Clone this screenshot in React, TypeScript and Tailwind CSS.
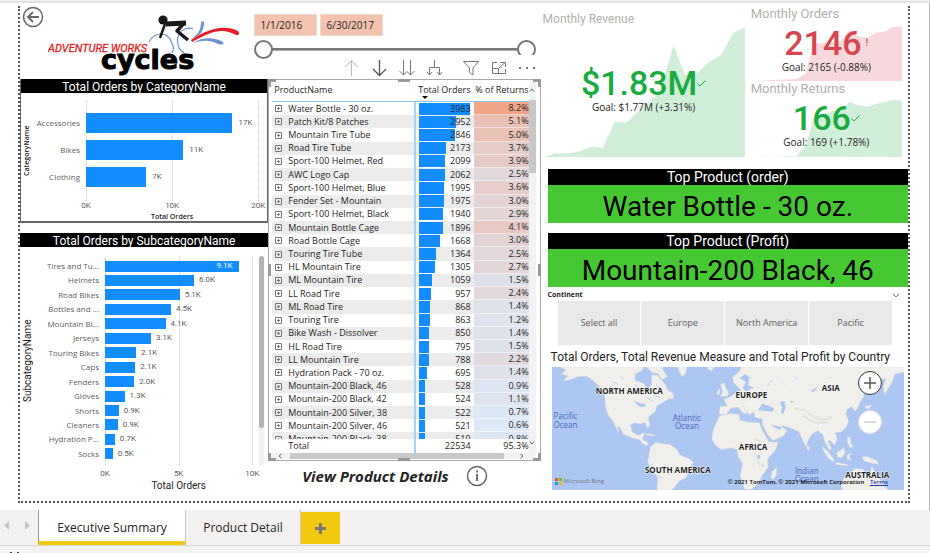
import React from "react";

type Bar = { name: string; value: string; pct: number };

const categories: Bar[] = [
  { name: "Accessories", value: "17K", pct: 85 },
  { name: "Bikes", value: "11K", pct: 56.5 },
  { name: "Clothing", value: "7K", pct: 35 },
];

const subcategories: Bar[] = [
  { name: "Tires and Tu...", value: "9.1K", pct: 90.7 },
  { name: "Helmets", value: "6.0K", pct: 60.4 },
  { name: "Road Bikes", value: "5.1K", pct: 50.7 },
  { name: "Bottles and ...", value: "4.5K", pct: 44.8 },
  { name: "Mountain Bi...", value: "4.1K", pct: 41.1 },
  { name: "Jerseys", value: "3.1K", pct: 31.2 },
  { name: "Touring Bikes", value: "2.1K", pct: 21.1 },
  { name: "Caps", value: "2.1K", pct: 20.6 },
  { name: "Fenders", value: "2.0K", pct: 19.8 },
  { name: "Gloves", value: "1.3K", pct: 13.3 },
  { name: "Shorts", value: "0.9K", pct: 9.3 },
  { name: "Cleaners", value: "0.9K", pct: 8.6 },
  { name: "Hydration P...", value: "0.7K", pct: 6.7 },
  { name: "Socks", value: "0.5K", pct: 5.2 },
];

const products: [string, number, number][] = [
  ["Water Bottle - 30 oz.", 3983, 8.2],
  ["Patch Kit/8 Patches", 2952, 5.1],
  ["Mountain Tire Tube", 2846, 5.0],
  ["Road Tire Tube", 2173, 3.7],
  ["Sport-100 Helmet, Red", 2099, 3.9],
  ["AWC Logo Cap", 2062, 2.5],
  ["Sport-100 Helmet, Blue", 1995, 3.6],
  ["Fender Set - Mountain", 1975, 3.0],
  ["Sport-100 Helmet, Black", 1940, 2.9],
  ["Mountain Bottle Cage", 1896, 4.1],
  ["Road Bottle Cage", 1668, 3.0],
  ["Touring Tire Tube", 1364, 2.5],
  ["HL Mountain Tire", 1305, 2.7],
  ["ML Mountain Tire", 1059, 1.5],
  ["LL Road Tire", 957, 2.4],
  ["ML Road Tire", 868, 1.4],
  ["Touring Tire", 863, 1.2],
  ["Bike Wash - Dissolver", 850, 1.4],
  ["HL Road Tire", 795, 1.5],
  ["LL Mountain Tire", 788, 2.2],
  ["Hydration Pack - 70 oz.", 695, 1.4],
  ["Mountain-200 Black, 46", 528, 0.9],
  ["Mountain-200 Black, 42", 524, 1.1],
  ["Mountain-200 Silver, 38", 522, 0.7],
  ["Mountain-200 Silver, 46", 521, 0.6],
  ["Mountain-200 Black, 38", 519, 0.8],
];

function heat(value: number) {
  const t = Math.min(1, Math.max(0, (value - 0.6) / 7.6));
  const low = [221, 233, 247];
  const high = [240, 164, 136];
  return `rgb(${low.map((c, i) => Math.round(c + (high[i] - c) * t)).join(",")})`;
}

function Logo() {
  return (
    <svg viewBox="0 0 194 64" className="h-16 w-[194px]" role="img" aria-label="Adventure Works Cycles">
      <g fill="none" stroke="#6f93d2" strokeWidth="1.2">
        <path d="M101 28 C107 17 119 18 123 27 C126 33 126 35 124 39" />
        <path d="M137 40 C127 34 127 19 137 15 C140 14 143 14 145 15" />
      </g>
      <path d="M143 25 C150 21 153 16 153 8 C155 6 157 8 156 11 C155 18 151 23 143 25Z" fill="#6f93d2" />
      <path d="M145 29 C156 22 168 24 175 28 C177 31 173 31 170 30 C162 26 155 26 145 29Z" fill="#6f93d2" />
      <path d="M143 26 C156 17 175 9 190 17 C193 21 189 22 186 20 C173 13 160 19 144 28Z" fill="#ec1c24" />
      <g fill="none" stroke="#1a1718" strokeLinejoin="round">
        <path d="M112 24 L117 10 L120 9" strokeWidth="2.5" />
        <path d="M118 10 L138 9" strokeWidth="5" />
        <path d="M137 8 L129 17 L140 26" strokeWidth="3.5" />
      </g>
      <circle cx="115" cy="6" r="4.6" fill="#1a1718" />
      <text x="0" y="38" fill="#ec1c24" stroke="#ec1c24" strokeWidth="0.3" fontSize="11" fontStyle="italic" fontFamily="Roboto, sans-serif">ADVENTURE WORKS</text>
      <text x="53" y="55" fill="#000" stroke="#000" strokeWidth="1" fontSize="27" fontWeight="700" fontFamily="'DejaVu Sans', sans-serif">cycles</text>
    </svg>
  );
}

function BackButton() {
  return (
    <button aria-label="Back" className="ml-0.5 h-[22px] w-[22px] shrink-0">
      <svg viewBox="0 0 22 22" className="h-[22px] w-[22px]" fill="none" stroke="#666">
        <circle cx="11" cy="11" r="9.5" strokeWidth="1.5" />
        <path d="M17 11 H6 M11 6 L6 11 L11 16" strokeWidth="1.8" />
      </svg>
    </button>
  );
}

const thumb =
  "pointer-events-none absolute inset-x-0 top-0 m-0 h-[19px] w-full appearance-none bg-transparent [&::-webkit-slider-thumb]:pointer-events-auto [&::-webkit-slider-thumb]:h-[19px] [&::-webkit-slider-thumb]:w-[19px] [&::-webkit-slider-thumb]:appearance-none [&::-webkit-slider-thumb]:rounded-full [&::-webkit-slider-thumb]:border-2 [&::-webkit-slider-thumb]:border-[#777] [&::-webkit-slider-thumb]:bg-white";

function DateSlicer() {
  const box = "h-[22px] border border-[#f0d8cc] bg-[#f4c3ad] px-1.5 text-[10px] text-[#252423] outline-none";
  return (
    <div className="flex w-[282px] flex-col">
      <div className="mt-2 flex gap-[3px]">
        <input aria-label="Start date" defaultValue="1/1/2016" className={`${box} w-[63px]`} />
        <input aria-label="End date" defaultValue="6/30/2017" className={`${box} w-[63px]`} />
      </div>
      <div className="relative mt-1 h-[19px]">
        <div className="absolute inset-x-3 top-2 h-[3px] border-b border-[#aaa] bg-[#777]" />
        <input type="range" aria-label="Range start" min={0} max={100} defaultValue={0} className={thumb} />
        <input type="range" aria-label="Range end" min={0} max={100} defaultValue={100} className={thumb} />
      </div>
      <VisualToolbar />
    </div>
  );
}

function VisualToolbar() {
  const b = "flex h-5 w-[18px] items-center justify-center";
  return (
    <div className="relative z-10 -mt-1 ml-[88px] flex h-6 items-center bg-white pt-0.5 text-[#777]">
      <button aria-label="Drill up" className={`${b} text-[#bbb]`}>
        <svg viewBox="0 0 18 18" className="h-[18px] w-[18px]" fill="none" stroke="currentColor"><path d="M9.500 17 V2 M3 8 L9.500 1.500 L16 8" /></svg>
      </button>
      <button aria-label="Drill down" className={`${b} ml-2.5 text-[#555]`}>
        <svg viewBox="0 0 18 18" className="h-[18px] w-[18px]" fill="none" stroke="currentColor" strokeWidth="1.300"><path d="M9.500 1 V16 M3 10 L9.500 16.500 L16 10" /></svg>
      </button>
      <button aria-label="Next level" className={`${b} ml-2.5`}>
        <svg viewBox="0 0 18 18" className="h-[18px] w-[18px]" fill="none" stroke="currentColor"><path d="M5.500 1 V16 M1.500 12 L5.500 16 L9 12.500 M12.500 1 V16 M9 12.500 L12.500 16 L16.500 12" /></svg>
      </button>
      <button aria-label="Expand all" className={`${b} ml-2.5`}>
        <svg viewBox="0 0 18 18" className="h-[18px] w-[18px]" fill="none" stroke="currentColor"><path d="M8.500 1 V8 M3.500 16 V8.500 H13.500 V16 M1 13 L3.500 16 L6 13 M11 13 L13.500 16 L16 13" /></svg>
      </button>
      <button aria-label="Filters" className={`${b} ml-[18px]`}>
        <svg viewBox="0 0 18 18" className="h-[18px] w-[18px]" fill="none" stroke="currentColor"><path d="M1.500 2.500 H16.500 L11 9 V16 L7.500 13.500 V9 Z" /></svg>
      </button>
      <button aria-label="Focus mode" className={`${b} ml-2.5`}>
        <svg viewBox="0 0 18 18" className="h-[18px] w-[18px]" fill="none" stroke="currentColor"><path d="M7 3.500 H2.500 V14.500 H15.500 V10 M2.500 9.500 H8.500 V14.500 M9 9 L15 3.500 M10.500 3.500 H15.500 V8" /></svg>
      </button>
      <button aria-label="More options" className={`${b} ml-2.5`}>
        <svg viewBox="0 0 18 18" className="h-[18px] w-[18px]" fill="#777"><path d="M1 8h2v2h-2z M8 8h2v2h-2z M15 8h2v2h-2z" /></svg>
      </button>
    </div>
  );
}

function GridLines() {
  return (
    <div aria-hidden className="absolute inset-0 flex justify-between">
      {[0, 1, 2].map((i) => (
        <div key={i} className="-mr-px border-l border-dotted border-[#ccc]" />
      ))}
    </div>
  );
}

function Axis({ labels }: { labels: string[] }) {
  return (
    <div className="flex justify-between font-[Roboto,sans-serif] text-[8px] leading-[10px] text-[#605e5c]">
      {labels.map((l) => (
        <span key={l} className="flex w-0 justify-center">{l}</span>
      ))}
    </div>
  );
}

function CategoryChart() {
  return (
    <section className="flex h-36 flex-col border-x border-b-2 border-[#666] bg-white">
      <h2 className="h-[14px] bg-black text-center font-[Roboto,sans-serif] text-[12px] leading-4 text-white">Total Orders by CategoryName</h2>
      <div className="flex flex-1 pt-2">
        <div className="flex w-[65px] justify-between pr-1.5">
          <span className="h-[100px] w-3 rotate-180 text-center text-[7px] leading-3 font-semibold text-[#252423] [writing-mode:vertical-rl]">CategoryName</span>
          <div className="flex flex-col gap-[7px] pt-3 text-right text-[8px] leading-5 text-[#605e5c]">
            {categories.map((c) => <span key={c.name}>{c.name}</span>)}
          </div>
        </div>
        <div className="mr-[9px] flex-1">
          <div className="relative flex h-[100px] flex-col gap-[7px] pt-3">
            <GridLines />
            {categories.map((c) => (
              <div key={c.name} className="relative flex h-5 items-center">
                <div className="h-full shrink-0 bg-[#118dff]" style={{ width: `${c.pct}%` }} />
                <span className="ml-1.5 font-[Roboto,sans-serif] text-[8px] text-[#605e5c]">{c.value}</span>
              </div>
            ))}
          </div>
          <Axis labels={["0K", "10K", "20K"]} />
          <p className="text-center text-[7px] leading-3 font-semibold text-[#252423]">Total Orders</p>
        </div>
      </div>
    </section>
  );
}

function SubcategoryChart() {
  return (
    <section className="mt-2.5 flex flex-1 flex-col">
      <h2 className="h-[14px] bg-black text-center font-[Roboto,sans-serif] text-[12px] leading-4 text-white">Total Orders by SubcategoryName</h2>
      <div className="flex pt-[9px]">
        <div className="flex w-[85px] justify-between pr-1.5">
          <span className="h-[209px] w-4 rotate-180 text-center font-[Roboto,sans-serif] text-[10px] leading-4 text-[#252423] [writing-mode:vertical-rl]">SubcategoryName</span>
          <div className="flex h-[209px] flex-col justify-between pt-1 pb-[5px] text-right text-[8px] leading-3 whitespace-nowrap text-[#605e5c]">
            {subcategories.map((c) => <span key={c.name}>{c.name}</span>)}
          </div>
        </div>
        <div className="mr-[7px] flex-1">
          <div className="relative flex h-[209px] flex-col justify-between pt-1 pb-[5px]">
            <GridLines />
            {subcategories.map((c, i) => (
              <div key={c.name} className="relative flex h-3 items-center">
                <div className="flex h-[11px] shrink-0 items-center justify-end bg-[#118dff] pr-1.5 font-[Roboto,sans-serif] text-[8px] text-white" style={{ width: `${c.pct}%` }}>
                  {i === 0 && c.value}
                </div>
                {i > 0 && <span className="ml-[5px] font-[Roboto,sans-serif] text-[8px] text-[#605e5c]">{c.value}</span>}
              </div>
            ))}
          </div>
          <div className="pt-1"><Axis labels={["0K", "5K", "10K"]} /></div>
          <p className="pt-px text-center font-[Roboto,sans-serif] text-[10px] leading-3 text-[#252423]">Total Orders</p>
        </div>
        <div className="mr-1 h-[209px] w-[5px] rounded-full bg-[#f0f0f0]">
          <div className="h-[172px] rounded-full bg-[#b3b3b3]" />
        </div>
      </div>
    </section>
  );
}

function ResizeHandles() {
  const h = "absolute border-[#999]";
  return (
    <div aria-hidden className="pointer-events-none">
      <i className={`${h} -top-px -left-px h-2 w-2 border-t-3 border-l-3`} />
      <i className={`${h} -top-px -right-px h-2 w-2 border-t-3 border-r-3`} />
      <i className={`${h} -bottom-px -left-px h-2 w-2 border-b-3 border-l-3`} />
      <i className={`${h} -right-px -bottom-px h-2 w-2 border-r-3 border-b-3`} />
      <i className={`${h} -top-px left-1/2 w-3 -translate-x-1/2 border-t-3`} />
      <i className={`${h} -bottom-px left-1/2 w-3 -translate-x-1/2 border-t-3`} />
      <i className={`${h} top-1/2 -left-px h-3 -translate-y-1/2 border-l-3`} />
      <i className={`${h} top-1/2 -right-px h-3 -translate-y-1/2 border-l-3`} />
    </div>
  );
}

function ProductTable() {
  return (
    <div className="relative flex h-[382px] flex-col border border-[#aaa] bg-white pt-0.5 pl-[3px]">
      <ResizeHandles />
      <div className="flex pr-1">
        <div className="h-[371px] flex-1 overflow-hidden">
          <table className="h-[378px] w-full table-fixed border-separate border-spacing-0 text-[9px] leading-3 whitespace-nowrap text-[#252423]">
            <thead>
              <tr className="h-5">
                <th className="border-b border-[#8cc4f5] p-0 pt-0.5 pl-0.5 text-left align-top font-normal">ProductName</th>
                <th className="w-[58px] border-b border-[#8cc4f5] p-0 pt-0.5 pr-[3px] text-right align-top font-normal">
                  <div>Total Orders</div>
                  <svg viewBox="0 0 6 3" className="ml-1.5 h-[3px] w-1.5"><path d="M0 0H6L3 3Z" /></svg>
                </th>
                <th className="w-[55px] border-b border-[#8cc4f5] p-0 pt-0.5 text-right align-top font-normal">% of Returns</th>
              </tr>
            </thead>
            <tbody>
              {products.map(([name, orders, returns]) => (
                <tr key={name} className="even:bg-[#ececec]">
                  <td className="border-r-2 border-[#a8d2f8] p-0">
                    <span className="flex items-center">
                      <button aria-label={`Expand ${name}`} className="mr-1.5 ml-[3px] h-[7px] w-[7px]">
                        <svg viewBox="0 0 7 7" className="h-[7px] w-[7px]" fill="none" stroke="#777"><path d="M.5 .5H6.500V6.500H.5Z M2 3.500H5M3.500 2V5" /></svg>
                      </button>
                      {name}
                    </span>
                  </td>
                  <td className="p-0 pl-[3px]">
                    <div className="relative mr-[3px] h-3 text-right">
                      <div className="absolute inset-y-0 left-0 bg-[#118dff]" style={{ width: `${(orders / 3983) * 98}%` }} />
                      <span className="relative">{orders}</span>
                    </div>
                  </td>
                  <td className="border-b border-white/50 p-0 text-right" style={{ backgroundColor: heat(returns) }}>
                    {returns.toFixed(1)}%
                  </td>
                </tr>
              ))}
            </tbody>
            <tfoot>
              <tr className="h-[14px]">
                <td className="sticky bottom-0 z-10 border-r-2 border-[#a8d2f8] bg-white p-0 pl-4">Total</td>
                <td className="sticky bottom-0 z-10 bg-white p-0 pr-[3px] text-right">22534</td>
                <td className="sticky bottom-0 z-10 bg-white p-0 text-right">95.3%</td>
              </tr>
            </tfoot>
          </table>
        </div>
        <div className="flex w-[7px] flex-col items-center bg-[#f2f2f2] pt-[6px] pb-2 text-[#666]">
          <svg viewBox="0 0 6 4" className="h-1 w-1.5" fill="none" stroke="currentColor"><path d="M1 3.500L3 1L5 3.500" /></svg>
          <div className="mt-2 h-[73px] w-full bg-[#c8c8c8]" />
          <svg viewBox="0 0 6 4" className="mt-auto h-1 w-1.5" fill="none" stroke="currentColor"><path d="M1 .5L3 3L5 .5" /></svg>
        </div>
      </div>
      <div className="mr-1 flex h-1.5 items-center gap-2 bg-[#f2f2f2] px-1.5 text-[#666]">
        <svg viewBox="0 0 4 6" className="h-1.5 w-1" fill="none" stroke="currentColor"><path d="M3.500 1L1 3L3.500 5" /></svg>
        <div className="mr-2 h-1.5 flex-1 bg-[#c8c8c8]" />
        <svg viewBox="0 0 4 6" className="mr-1.5 h-1.5 w-1" fill="none" stroke="currentColor"><path d="M.5 1L3 3L.5 5" /></svg>
      </div>
    </div>
  );
}

type KpiProps = {
  title: string; value: string; goal: string; good: boolean; area: string; viewBox: string; size: string; gap: string; titleSize: string;
};

function Kpi({ title, value, goal, good, area, viewBox, size, gap, titleSize }: KpiProps) {
  return (
    <section className="flex flex-col font-[Roboto,sans-serif]">
      <h3 className={`${titleSize} text-[#b3b0ad]`}>{title}</h3>
      <div className={`relative ${size}`}>
        <svg viewBox={viewBox} preserveAspectRatio="none" className="absolute inset-0 h-full w-full" aria-hidden>
          <polygon points={area} fill={good ? "#d1eed9" : "#f7d9dd"} />
        </svg>
        <div className={`relative flex flex-col items-center ${gap}`}>
          <div className={`flex items-center text-[34px] leading-9 font-medium ${good ? "text-[#1aab40]" : "text-[#d64550]"}`}>
            {value}
            {good ? (
              <svg viewBox="0 0 9 7" className="h-[7px] w-[9px]" fill="none" stroke="currentColor"><path d="M.5 3.500L3 6L8.500 .5" /></svg>
            ) : (
              <span className="ml-1 text-[11px] font-normal">!</span>
            )}
          </div>
          <p className="font-['Open_Sans',sans-serif] text-[10px] leading-3 text-[#252423]">{goal}</p>
        </div>
      </div>
    </section>
  );
}

function TopProduct({ title, name }: { title: string; name: string }) {
  return (
    <section className="mb-2.5 text-center font-[Roboto,sans-serif]">
      <h2 className="h-4 bg-black text-[14px] leading-4 text-white">{title}</h2>
      <p className="h-[38px] bg-[#46c832] pt-1 text-[28px] leading-9 text-black">{name}</p>
    </section>
  );
}

function WorldMap() {
  return (
    <div className="relative mr-1 ml-1 h-[123px] bg-[#abc7f2]">
      <svg viewBox="36 66 1053 369" preserveAspectRatio="xMidYMid slice" className="h-full w-full" role="img" aria-label="World map">
        <g fill="#f0efec" stroke="#dcdcd8" strokeWidth="1.500" strokeLinejoin="round">
          <path d="M60 66L78 76 64 88 84 92 70 108 92 104 112 96 138 94 156 104 172 120 184 134 194 156 196 188 204 210 218 228 228 250 236 262 230 242 240 250 250 268 276 278 298 284 308 296 320 302 322 292 306 284 312 262 294 272 276 262 270 240 280 234 300 236 314 232 322 250 328 240 324 216 344 200 350 182 372 170 392 158 396 144 382 136 372 116 362 104 352 92 334 90 334 116 324 138 310 116 284 106 284 88 304 78 310 66Z" />
          <path d="M318 66L366 66 370 80 380 96 366 104 352 86 336 84Z" />
          <path d="M388 150L398 148 400 160 390 162Z" />
          <path d="M412 66L440 66 434 88 426 96 418 84Z" />
          <path d="M330 306L346 292 362 296 388 298 408 312 418 330 448 342 458 352 444 372 438 396 416 408 402 426 394 435 350 435 352 396 336 378 322 350Z" />
          <path d="M310 268L330 266 346 272 330 272Z" />
          <path d="M540 154L546 140 540 118 552 114 554 128 564 144 560 154Z" />
          <path d="M532 136L538 132 536 148 528 148Z" />
          <path d="M500 66L520 66 514 78 502 74Z" />
          <path d="M578 112L576 96 596 80 602 66H1089V82L1060 88 1054 108 1040 132 1030 150 1026 126 1034 100 1004 108 972 116 966 136 968 154 954 176 948 192 940 198 932 184 918 194 914 206 922 230 914 248 898 262 882 262 888 282 880 300 866 286 860 288 872 312 864 314 852 292 846 270 830 256 812 268 800 286 796 306 784 284 774 260 752 250 736 244 720 242 738 258 728 272 696 286 682 272 664 238 666 222 644 218 638 200 626 210 614 196 604 180 620 204 608 206 592 186 570 190 556 210 536 208 538 184 560 184 550 164 572 154 586 142 602 138Z" />
          <path d="M536 214L570 206 594 208 598 226 624 232 656 234 664 256 684 290 712 292 704 314 680 342 682 366 664 390 654 412 634 432H612L598 390 606 356 592 334 590 314 570 308 542 314 524 300 514 282 518 254Z" />
          <path d="M694 378L708 366 706 390 696 404 690 398Z" />
          <path d="M900 416L912 392 930 382 942 370 966 372 970 384 986 388 992 364 1004 388 1022 408 1040 435H904Z" />
          <path d="M842 304L860 318 876 340 880 350 864 342 850 322Z" />
          <path d="M886 324L908 308 912 322 902 338 890 336Z" />
          <path d="M962 336L978 334 1008 348 1012 358 984 352 968 346Z" />
          <path d="M918 278L926 276 928 292 936 306 928 308 920 294Z" />
          <path d="M918 328L930 324 924 334 930 346 918 342Z" />
          <path d="M886 352L920 358 918 362 884 358Z" />
          <path d="M972 184L990 180 984 192 972 190Z" />
          <path d="M976 196L982 210 974 226 954 232 958 224 970 216Z" />
          <path d="M798 302L806 306 804 316 798 312Z" />
        </g>
        <g fill="#abc7f2">
          <path d="M598 100L616 112 606 128 614 140 640 128 622 122 626 98 612 88Z" />
          <path d="M652 196L664 176 680 182 700 190 696 200 672 198Z" />
          <path d="M716 172L730 168 734 186 728 206 720 204 724 188Z" />
          <path d="M688 238L704 250 718 254 722 246 704 242Z" />
          <path d="M650 330h8v10h-8z M664 350l4 16-4-2z M810 138l22-14-16 18z M745 170l12-2-4 6z" />
          <path d="M280 168L298 174 316 178 312 186 296 184Z" />
        </g>
        <g fill="none" stroke="#abc7f2" strokeWidth="2">
          <path d="M284 120l16 12M240 96l12 8M216 112l14 4M348 116l10 20M340 150l20 8M640 150l14 10M620 90l14 14M320 160l20 10M680 124l12-18M760 92l10 14M350 390l14 8" />
          <path d="M640 314l10 28 8 26M600 160l18 8M850 104l24-8M720 110l14 10M820 220l30 10" stroke="#c8d6ea" strokeWidth="1.500" />
        </g>
        <path d="M760 190l30 6 24 18 38 10 22-8M784 212l40 22 36-2M640 280l20 10" fill="none" stroke="#e4e2dc" strokeWidth="6" />
        <g fontFamily="'Open Sans', sans-serif" fontSize="24" fontWeight="700" fill="#222" stroke="#fff" strokeWidth="3" paintOrder="stroke" textAnchor="middle">
          <text x="267" y="146">NORTH AMERICA</text>
          <text x="632" y="158">EUROPE</text>
          <text x="869" y="137">ASIA</text>
          <text x="637" y="316">AFRICA</text>
          <text x="412" y="383">SOUTH AMERICA</text>
          <text x="978" y="399">AUSTRALIA</text>
        </g>
        <g fontFamily="'Open Sans', sans-serif" fontSize="24" fill="#4a6cb8" textAnchor="middle">
          <text x="76" y="222">Pacific</text>
          <text x="76" y="248">Ocean</text>
          <text x="439" y="227">Atlantic</text>
          <text x="439" y="252">Ocean</text>
          <text x="797" y="385">Indian</text>
          <text x="797" y="410">Ocean</text>
        </g>
      </svg>
      <div className="absolute bottom-[5px] left-[3px] flex items-center gap-0.5 text-[6px] leading-2 text-[#777]">
        <svg viewBox="0 0 7 7" className="h-[7px] w-[7px]"><path fill="#f25022" d="M0 0h3v3H0z" /><path fill="#7fba00" d="M4 0h3v3H4z" /><path fill="#00a4ef" d="M0 4h3v3H0z" /><path fill="#ffb900" d="M4 4h3v3H4z" /></svg>
        Microsoft Bing
      </div>
      <p className="absolute right-4 bottom-1 text-[6px] leading-2 font-semibold text-black">
        © 2021 TomTom, © 2021 Microsoft Corporation <a href="#terms" className="ml-1 text-[#1a3fb0] underline">Terms</a>
      </p>
      <div className="absolute top-1 right-[22px] flex flex-col gap-[15px]">
        <button aria-label="Zoom in" className="h-6 w-6 rounded-full border border-[#333] bg-white">
          <svg viewBox="0 0 22 22" stroke="#555" strokeWidth="1.500"><path d="M5 11H17M11 5V17" /></svg>
        </button>
        <button aria-label="Zoom out" className="h-6 w-6 rounded-full border border-[#ddd] bg-white">
          <svg viewBox="0 0 22 22" stroke="#ccc" strokeWidth="1.500"><path d="M5 11H17" /></svg>
        </button>
      </div>
    </div>
  );
}

export default function App() {
  return (
    <div className="bg-white font-['Open_Sans','Noto_Sans',sans-serif]">
      <div className="h-[3px] border-b-2 border-[#e1e1e1] bg-[#f3f2f1]" />
      <div className="border-r border-[#b5b5b5] pt-[3px] pr-[19px] pb-[7px] pl-[18px]">
        <main className="grid grid-cols-[520fr_367fr] border-x-2 border-b-2 border-dotted border-[#555]">
          <div className="flex min-w-0 flex-col">
            <header className="flex h-[73px]">
              <BackButton />
              <div className="mt-2 ml-1 flex-1"><Logo /></div>
              <DateSlicer />
              <div className="w-[5px]" />
            </header>
            <div className="grid flex-1 grid-cols-[248fr_272fr]">
              <div className="flex min-w-0 flex-col">
                <CategoryChart />
                <SubcategoryChart />
              </div>
              <div className="min-w-0">
                <ProductTable />
                <div className="flex items-center gap-[17px] pt-1 pl-[34px]">
                  <button className="text-[15px] leading-5 font-bold text-[#252423] italic">View Product Details</button>
                  <button aria-label="Information" className="h-[22px] w-[22px]">
                    <svg viewBox="0 0 22 22" fill="none" stroke="#666"><circle cx="11" cy="11" r="9.500" strokeWidth="1.500" /><path d="M11 9V16M11 5.500V7.500" strokeWidth="1.800" /></svg>
                  </button>
                </div>
              </div>
            </div>
          </div>
          <div className="min-w-0 pb-[11px]">
            <div className="grid grid-cols-[208fr_159fr] pl-0.5">
              <div className="min-w-0 pt-[5px] pr-[5px]">
                <Kpi title="Monthly Revenue" value="$1.83M" goal="Goal: $1.77M (+3.31%)" good titleSize="text-[12px] leading-4" size="h-[130px]" gap="pt-[38px]" viewBox="10 86 603 385"
                  area="12,471 45,461 80,461 115,456 152,441 188,444 224,366 260,369 295,335 330,305 358,280 400,140 433,228 470,222 505,190 542,168 578,102 613,86 613,471" />
              </div>
              <div className="min-w-0 pr-1.5 pl-px">
                <Kpi title="Monthly Orders" value="2146" goal="Goal: 2165 (-0.88%)" good={false} titleSize="text-[13px] leading-4" size="h-[59px]" gap="pt-[3px]" viewBox="634 64 455 177"
                  area="640,241 700,238 770,235 798,220 822,130 870,125 905,120 930,88 955,105 985,112 1008,96 1040,92 1062,78 1089,78 1089,241" />
                <Kpi title="Monthly Returns" value="166" goal="Goal: 169 (+1.78%)" good titleSize="text-[13px] leading-4" size="h-[60px]" gap="pt-[3px]" viewBox="634 291 455 180"
                  area="634,469 690,469 715,471 740,468 770,469 798,438 822,355 845,350 880,332 905,335 930,305 950,314 985,320 1008,312 1035,307 1062,300 1089,302 1089,471" />
              </div>
            </div>
            <div className="mt-3 pl-[7px]">
              <TopProduct title="Top Product (order)" name="Water Bottle - 30 oz." />
              <TopProduct title="Top Product (Profit)" name="Mountain-200 Black, 46" />
              <div className="-mt-2 flex h-3 items-center justify-between pr-2 text-[7px] font-bold text-[#252423]">
                <span>Continent</span>
                <svg viewBox="0 0 8 5" className="h-[5px] w-2" fill="none" stroke="#777"><path d="M1 1L4 4L7 1" /></svg>
              </div>
              <div className="mr-4 ml-2.5 grid h-11 grid-cols-4 gap-px">
                {["Select all", "Europe", "North America", "Pacific"].map((c) => (
                  <button key={c} className="bg-[#e9e9e9] text-[9px] text-[#605e5c]">{c}</button>
                ))}
              </div>
              <h2 className="mt-1 ml-[3px] h-[18px] font-[Roboto,sans-serif] text-[12px] leading-4 whitespace-nowrap text-[#252423]">
                Total Orders, Total Revenue Measure and Total Profit by Country
              </h2>
              <WorldMap />
            </div>
          </div>
        </main>
      </div>
      <nav className="flex h-[35px] bg-[#f3f2f1] text-[12px] text-[#252423]">
        <div className="flex w-[38px] items-center justify-between px-1 pb-1">
          <button aria-label="Previous page"><svg viewBox="0 0 5 9" className="h-[9px] w-[5px]" fill="#c8c6c4"><path d="M5 0V9L0 4.500Z" /></svg></button>
          <button aria-label="Next page" className="mr-1"><svg viewBox="0 0 5 9" className="h-[9px] w-[5px]" fill="#c8c6c4"><path d="M0 0V9L5 4.500Z" /></svg></button>
        </div>
        <button className="w-[147px] border-b-4 border-l border-b-[#f2c811] border-l-[#999] bg-white pt-1">Executive Summary</button>
        <button className="w-[116px] border-x border-[#c8c6c4]">Product Detail</button>
        <button aria-label="New page" className="mt-0.5 mb-px flex w-[39px] items-center justify-center bg-[#f2c811]">
          <svg viewBox="0 0 11 11" className="h-[11px] w-[11px]" stroke="#777" strokeWidth="3"><path d="M0 5.500H11M5.500 0V11" /></svg>
        </button>
      </nav>
      <footer className="flex h-2 items-end gap-[5px] border-t border-[#d8d8d8] bg-[#f3f2f1] pl-2.5">
        <i className="h-px w-0.5 bg-[#444]" />
        <i className="h-px w-0.5 bg-[#444]" />
      </footer>
    </div>
  );
}
